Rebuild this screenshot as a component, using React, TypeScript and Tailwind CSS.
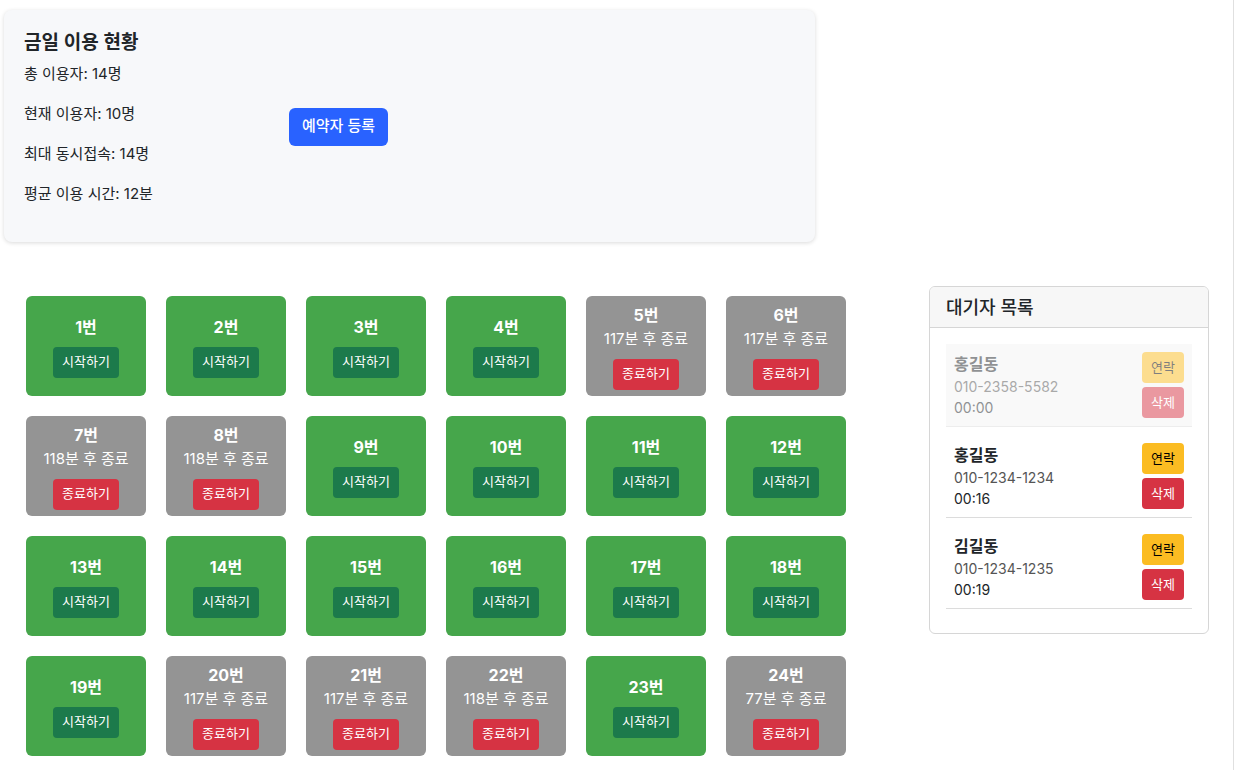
import React from "react";

type Seat = { no: number; left?: number };

const seats: Seat[] = [
  { no: 1 }, { no: 2 }, { no: 3 }, { no: 4 }, { no: 5, left: 117 }, { no: 6, left: 117 },
  { no: 7, left: 118 }, { no: 8, left: 118 }, { no: 9 }, { no: 10 }, { no: 11 }, { no: 12 },
  { no: 13 }, { no: 14 }, { no: 15 }, { no: 16 }, { no: 17 }, { no: 18 },
  { no: 19 }, { no: 20, left: 117 }, { no: 21, left: 117 }, { no: 22, left: 118 }, { no: 23 }, { no: 24, left: 77 },
];

const waiting = [
  { name: "홍길동", phone: "010-2358-5582", time: "00:00", done: true },
  { name: "홍길동", phone: "010-1234-1234", time: "00:16" },
  { name: "김길동", phone: "010-1234-1235", time: "00:19" },
];

function SeatCard({ seat }: { seat: Seat }) {
  const inUse = seat.left !== undefined;
  return (
    <div
      className={
        "h-[100px] rounded-md flex flex-col items-center justify-center text-white " +
        (inUse ? "bg-[#949494]" : "bg-[#46a64b]")
      }
    >
      <div className="text-[16px] font-bold leading-6">{seat.no}번</div>
      {inUse && <div className="text-[15px] leading-6">{seat.left}분 후 종료</div>}
      {inUse ? (
        <button className="mt-2 h-[31px] w-[66px] rounded bg-[#d63343] text-[13px] text-white">
          종료하기
        </button>
      ) : (
        <button className="mt-2 h-[31px] w-[66px] rounded bg-[#1c7a4b] text-[13px] text-white">
          시작하기
        </button>
      )}
    </div>
  );
}

export default function App() {
  return (
    <div
      className="min-h-screen w-full bg-white border-r border-[#e0e0e0] text-[#212529]"
      style={{ fontFamily: '"Inter", "Noto Sans CJK KR", sans-serif' }}
    >
      <div className="pt-2.5 pl-1">
        <div className="w-[811px] rounded-lg bg-[#f7f8fa] shadow-[0_1px_4px_rgba(0,0,0,0.15)] px-5 pt-[21px] pb-5 flex items-center">
          <div className="w-[265px]">
            <h2 className="text-[19px] font-semibold leading-6 mb-[7px]">금일 이용 현황</h2>
            <p className="text-[15px] leading-6 mb-4">총 이용자: 14명</p>
            <p className="text-[15px] leading-6 mb-4">현재 이용자: 10명</p>
            <p className="text-[15px] leading-6 mb-4">최대 동시접속: 14명</p>
            <p className="text-[15px] leading-6 mb-4">평균 이용 시간: 12분</p>
          </div>
          <button className="h-[38px] w-[99px] rounded-md bg-[#2962ff] text-white text-[15px] font-medium">
            예약자 등록
          </button>
        </div>
      </div>

      <div className="flex items-start mt-[44px]">
        <div className="pl-[26px] pt-[10px] grid grid-cols-[repeat(6,120px)] gap-5">
          {seats.map((s) => (
            <SeatCard key={s.no} seat={s} />
          ))}
        </div>

        <div className="ml-[83px] w-[280px] rounded-md border border-[#d6d6d6] overflow-hidden">
          <div className="h-[41px] bg-[#f7f7f7] border-b border-[#d6d6d6] px-4 flex items-center text-[18px] font-medium">
            대기자 목록
          </div>
          <div className="p-4">
            {waiting.map((w, i) => (
              <div
                key={i}
                className={
                  "flex items-center justify-between px-2 py-2 mb-2 border-b border-[#dcdcdc] " +
                  (w.done ? "bg-[#f4f4f4] opacity-50" : "")
                }
              >
                <div>
                  <div className="text-[16px] font-bold leading-6">{w.name}</div>
                  <div className="text-[14px] leading-[21px] text-[#555]">{w.phone}</div>
                  <div className="text-[14px] leading-[21px]">{w.time}</div>
                </div>
                <div className="flex flex-col gap-1">
                  <button className="h-[31px] w-[42px] rounded bg-[#fbbc22] text-[13px] text-black">
                    연락
                  </button>
                  <button className="h-[31px] w-[42px] rounded bg-[#d63343] text-[13px] text-white">
                    삭제
                  </button>
                </div>
              </div>
            ))}
          </div>
        </div>
      </div>
    </div>
  );
}
